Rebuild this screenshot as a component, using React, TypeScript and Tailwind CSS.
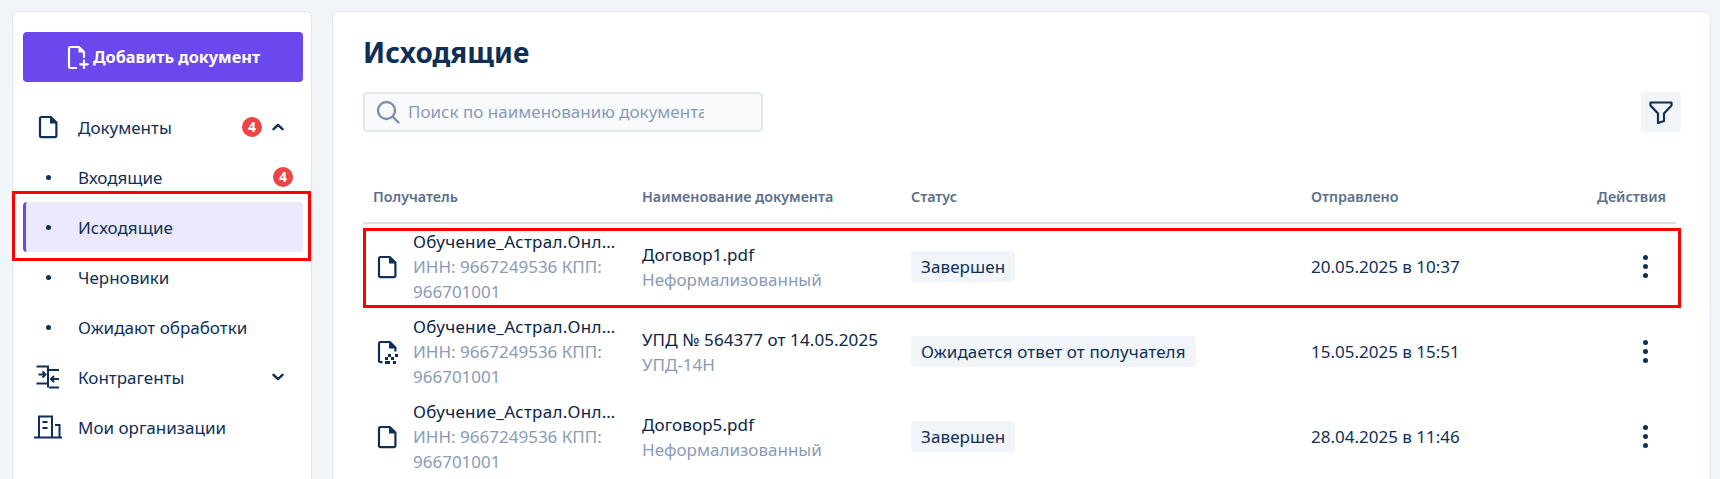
import React from "react";

const navy = "#0f2f57";

function FileIcon({ className = "" }: { className?: string }) {
  return (
    <svg width="24" height="24" viewBox="0 0 24 24" fill="none" stroke={navy} strokeWidth="2.2" strokeLinejoin="round" className={className}>
      <path d="M5.6 2h9.2l5.6 5.6v13a1.6 1.6 0 0 1-1.6 1.6H5.6A1.6 1.6 0 0 1 4 20.6V3.6A1.6 1.6 0 0 1 5.6 2Z" />
      <path d="M14 2v6.4h6.4" fill={navy} stroke="none" />
    </svg>
  );
}

function QrFileIcon() {
  return (
    <svg width="24" height="24" viewBox="0 0 24 24" fill="none">
      <path d="M7.5 22.2H5.6A1.6 1.6 0 0 1 4 20.6V3.6A1.6 1.6 0 0 1 5.6 2h9.2l5.6 5.6v4" stroke={navy} strokeWidth="2.2" strokeLinejoin="round" />
      <path d="M14 2v6.4h6.4Z" fill={navy} />
      <path d="M13 14h3v3h-3zM20 14h3v3h-3zM10 17h3v3h-3zM16 17h3v3h-3zM10 21h5v3h-5zM18 21h3v3h-3z" fill={navy} />
    </svg>
  );
}

function AddFileIcon() {
  return (
    <svg width="24" height="24" viewBox="0 0 24 24" fill="none" stroke="#fff" strokeWidth="2.2" strokeLinecap="round" strokeLinejoin="round">
      <path d="M10 23H4.6A1.6 1.6 0 0 1 3 21.4V3.6A1.6 1.6 0 0 1 4.6 2H13l5 5v5" />
      <path d="M12.5 2v5.5H18" fill="#fff" stroke="none" />
      <path d="M18 15.5V23M14.3 19.3h7.500" />
    </svg>
  );
}

function ContractorIcon() {
  return (
    <svg width="24" height="24" viewBox="0 0 24 24" fill="none" stroke={navy} strokeWidth="2">
      <path d="M0.5 1.5H12v21M0.5 18.500H12M13 5h10M13 22.500h10" />
      <path d="M2.5 9.500H9M6.500 6.500l3 3-3 3M23 14h-8M18 11l-3 3 3 3" />
    </svg>
  );
}

function OrgIcon() {
  return (
    <svg width="28" height="24" viewBox="0 0 28 24" fill="none" stroke={navy} strokeWidth="2">
      <path d="M0 22.500h28M5 22.500V1.500h13v21M21 10h4.500v12.500" />
      <path d="M8.500 7h5M8.500 13h5" />
    </svg>
  );
}

function Badge() {
  return (
    <span className="flex h-5 w-5 items-center justify-center rounded-full bg-[#ef4444] text-[14px] leading-none font-bold text-white">
      4
    </span>
  );
}

function Chevron({ up }: { up?: boolean }) {
  return (
    <svg width="12" height="8" viewBox="0 0 12 8" fill="none" stroke={navy} strokeWidth="2.4" strokeLinecap="round" strokeLinejoin="round">
      <path d={up ? "M1.5 6.2 6 1.800l4.500 4.400" : "M1.5 1.800 6 6.200l4.500-4.400"} />
    </svg>
  );
}

function Dot() {
  return (
    <span className="flex w-[24px] justify-center">
      <span className="h-[5px] w-[5px] rounded-full bg-[#0f2f57]" />
    </span>
  );
}

function NavRow({
  icon,
  label,
  right,
  active,
}: {
  icon: React.ReactNode;
  label: string;
  right?: React.ReactNode;
  active?: boolean;
}) {
  return (
    <div
      className={
        "flex h-[50px] items-center rounded pr-[10px] " +
        (active ? "border-l-[3px] border-[#6b48eb] bg-[#ede9fc] pl-[8px]" : "pl-[11px]")
      }
    >
      <span className="flex w-[28px] justify-center">{icon}</span>
      <span className="ml-[16px] flex-1 pt-[2px] text-[17px] leading-6 text-[#0f2f57]">{label}</span>
      {right}
    </div>
  );
}

const rows = [
  { icon: <FileIcon />, doc: "Договор1.pdf", type: "Неформализованный", status: "Завершен", date: "20.05.2025 в 10:37" },
  { icon: <QrFileIcon />, doc: "УПД № 564377 от 14.05.2025", type: "УПД-14Н", status: "Ожидается ответ от получателя", date: "15.05.2025 в 15:51" },
  { icon: <FileIcon />, doc: "Договор5.pdf", type: "Неформализованный", status: "Завершен", date: "28.04.2025 в 11:46" },
];

export default function App() {
  return (
    <div className="relative flex h-[479px] gap-[20px] overflow-hidden bg-[#f1f5f9] pt-[11px] pl-[12px] pr-[9px] font-['Noto_Sans',sans-serif]">
      <aside className="h-[520px] w-[300px] shrink-0 rounded-md border border-[#e2e8f0] bg-white pt-[20px] pl-[10px] pr-[8px]">
        <button className="flex h-[50px] w-[280px] items-center justify-center gap-[3px] rounded bg-[#6b48eb] text-[16.3px] font-bold text-white">
          <AddFileIcon />
          Добавить документ
        </button>
        <nav className="mt-[20px] w-[280px]">
          <NavRow
            icon={<FileIcon />}
            label="Документы"
            right={
              <span className="flex items-center gap-[10px] pr-[9px]">
                <Badge />
                <Chevron up />
              </span>
            }
          />
          <NavRow icon={<Dot />} label="Входящие" right={<span className="pb-[1px]"><Badge /></span>} />
          <NavRow icon={<Dot />} label="Исходящие" active />
          <NavRow icon={<Dot />} label="Черновики" />
          <NavRow icon={<Dot />} label="Ожидают обработки" />
          <NavRow icon={<ContractorIcon />} label="Контрагенты" right={<span className="pr-[9px]"><Chevron /></span>} />
          <NavRow icon={<OrgIcon />} label="Мои организации" />
        </nav>
      </aside>

      <main className="h-[520px] min-w-0 flex-1 rounded-md border border-[#e2e8f0] bg-white pt-[18px] pl-[30px] pr-[29px]">
        <h1 className="text-[28px] leading-[44px] font-bold text-[#0f2f57]">Исходящие</h1>
        <div className="mt-[18px] flex items-center justify-between">
          <div className="flex h-[40px] w-[400px] items-center rounded border-2 border-[#e2e8f0] bg-[#f8fafc] pl-[11px]">
            <svg width="24" height="24" viewBox="0 0 24 24" fill="none" stroke="#7b8fae" strokeWidth="2.4" strokeLinecap="round">
              <circle cx="10.5" cy="10.5" r="8.5" />
              <path d="m17 17 5.5 5.5" />
            </svg>
            <span className="ml-[8px] w-[296px] overflow-hidden text-[17px] whitespace-nowrap text-[#8a9bb5]">
              Поиск по наименованию документа
            </span>
          </div>
          <button className="flex h-[40px] w-[40px] items-center justify-center rounded bg-[#f1f5f9]">
            <svg width="24" height="24" viewBox="0 0 24 24" fill="none" stroke={navy} strokeWidth="2.2" strokeLinejoin="round">
              <path d="M1.5 2.5h21v3l-7.500 8v7.500l-6 2v-9.500l-7.500-8Z" />
            </svg>
          </button>
        </div>

        <div className="mt-[35px] mr-[5px] flex h-[57px] items-center border-b-2 border-[#e0e0e0] pt-[4px] pl-[10px] text-[14.3px] font-semibold text-[#5c6f8c]">
          <span className="w-[269px]">Получатель</span>
          <span className="w-[269px]">Наименование документа</span>
          <span className="w-[400px]">Статус</span>
          <span className="flex-1">Отправлено</span>
          <span className="pr-[10px]">Действия</span>
        </div>

        {rows.map((r) => (
          <div key={r.date} className="mr-[5px] flex h-[85px] items-center pl-[10px] text-[17px] leading-[25px]">
            <div className="flex w-[269px] items-center">
              <span className="w-[30px] pl-[2px]">{r.icon}</span>
              <div className="ml-[10px] w-[204px]">
                <div className="truncate tracking-[0.3px] text-[#0b2545]">Обучение_Астрал.Онлайн</div>
                <div className="text-[#8a9bb5]">ИНН: 9667249536 КПП: 966701001</div>
              </div>
            </div>
            <div className="w-[269px]">
              <div className="tracking-[0.1px] text-[#0b2545]">{r.doc}</div>
              <div className="text-[#8a9bb5]">{r.type}</div>
            </div>
            <div className="w-[400px]">
              <span className="inline-block rounded bg-[#f1f5f9] px-[10px] py-[3px] tracking-[0.1px] text-[#0f2f57]">{r.status}</span>
            </div>
            <div className="flex-1 text-[#0f2f57]">{r.date}</div>
            <div className="mr-[11px] flex w-[40px] flex-col items-center gap-[4px]">
              <span className="h-[5px] w-[5px] rounded-full bg-[#0f2f57]" />
              <span className="h-[5px] w-[5px] rounded-full bg-[#0f2f57]" />
              <span className="h-[5px] w-[5px] rounded-full bg-[#0f2f57]" />
            </div>
          </div>
        ))}
      </main>

      <div className="pointer-events-none absolute top-[191px] left-[12px] h-[70px] w-[299px] border-[3px] border-[#ff0000]" />
      <div className="pointer-events-none absolute top-[228px] left-[363px] h-[80px] w-[1318px] border-[3px] border-[#ff0000]" />
    </div>
  );
}
